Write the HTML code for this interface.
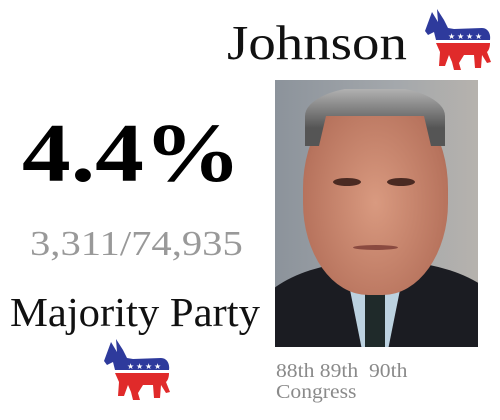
<!DOCTYPE html>
<html><head><style>
body{margin:0;width:500px;height:420px;background:#fff;position:relative;overflow:hidden;font-family:"Liberation Serif",serif}
.t{position:absolute;white-space:nowrap;line-height:1;transform-origin:left top}
</style></head><body>
<svg width="0" height="0" style="position:absolute"><defs>
<g id="d">
<path d="M8 4 L14 14 L13 1 L20 12 L24 20 L30 21 L58 20 C64 20 67 26 66 32 L12 32 L10 24 L4 27 L1 23 Z" fill="#2e3a9c"/>
<path d="M12 35 L66 35 C66 39 65 42 63 44 L67 54 L63 55 L58 47 L57 60 L51 60 L50 47 L40 47 L35 55 L37 62 L30 62 L28 54 L25 47 L21 58 L15 58 L16 44 Z" fill="#e02a2a"/>
<g fill="#fff" font-size="8" font-family="DejaVu Sans"><text x="24" y="31">★</text><text x="33" y="31">★</text><text x="42" y="31">★</text><text x="51" y="31">★</text></g>
</g></defs></svg>
<svg style="position:absolute;left:424px;top:8px" width="68" height="64" viewBox="0 0 68 64"><use href="#d"/></svg>
<svg style="position:absolute;left:103px;top:338px" width="68" height="64" viewBox="0 0 68 64"><use href="#d"/></svg>
<div class="t" style="left:227px;top:18px;font-size:49px;color:#111;transform:scaleX(1.12)">Johnson</div>
<div class="t" style="left:22px;top:112px;font-size:84px;font-weight:bold;transform:scaleX(1.16);color:#000">4.4%</div>
<div class="t" style="left:30px;top:226px;font-size:35px;color:#999;transform:scaleX(1.16)">3,311/74,935</div>
<div class="t" style="left:10px;top:292px;font-size:41px;color:#111;transform:scaleX(1.04)">Majority Party</div>
<div style="position:absolute;left:275px;top:80px;width:203px;height:267px;overflow:hidden;background:linear-gradient(90deg,#8c939b,#a4a8ac 60%,#b6b2ad)">
<div style="position:absolute;left:-20px;top:180px;width:250px;height:120px;border-radius:50% 50% 0 0;background:#1b1c22"></div>
<div style="position:absolute;left:70px;top:185px;width:60px;height:90px;background:#bcd2e0;clip-path:polygon(0 0,100% 0,70% 100%,30% 100%)"></div>
<div style="position:absolute;left:90px;top:205px;width:20px;height:70px;background:#1f2a2a"></div>
<div style="position:absolute;left:28px;top:10px;width:145px;height:205px;border-radius:48% 48% 45% 45%;background:radial-gradient(ellipse at 50% 55%,#d99a80,#b7735d 70%,#8a5446)"></div>
<div style="position:absolute;left:30px;top:6px;width:140px;height:60px;border-radius:50% 50% 0 0;background:linear-gradient(#b8b8b8,#555 70%);clip-path:polygon(0 100%,0 30%,20% 5%,80% 5%,100% 30%,100% 100%,90% 100%,85% 50%,15% 50%,10% 100%)"></div>
<div style="position:absolute;left:58px;top:98px;width:28px;height:8px;background:#4a2a22;border-radius:50%"></div>
<div style="position:absolute;left:112px;top:98px;width:28px;height:8px;background:#4a2a22;border-radius:50%"></div>
<div style="position:absolute;left:78px;top:165px;width:45px;height:5px;background:#8a4a40;border-radius:50%"></div>
</div>
<div class="t" style="left:276px;top:361px;font-size:20px;color:#8a8a8a;line-height:21px;transform:scaleX(1.08)">88th 89th&nbsp; 90th<br>Congress</div>
</body></html>
